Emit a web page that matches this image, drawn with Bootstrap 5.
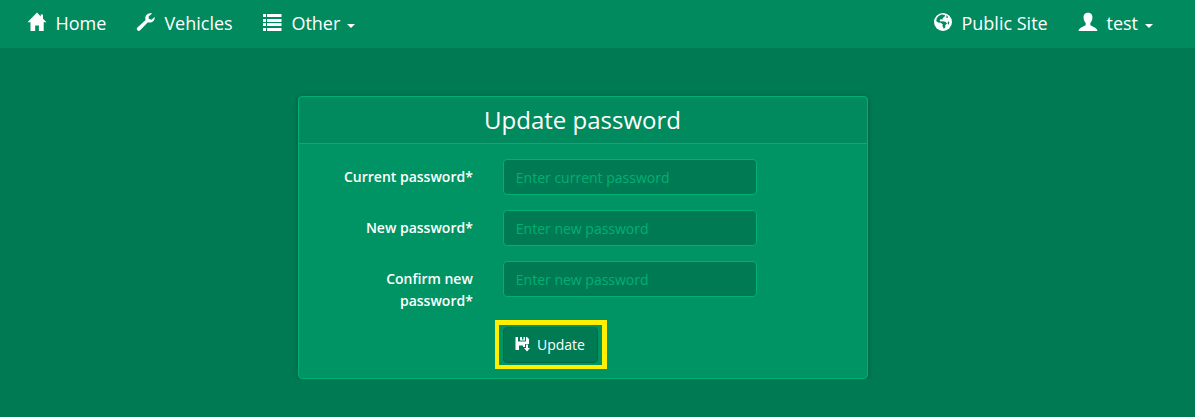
<!DOCTYPE html>
<html lang="en">
<head>
<meta charset="utf-8">
<meta name="viewport" content="width=device-width, initial-scale=1">
<title>Update password</title>
<link href="https://cdn.jsdelivr.net/npm/bootstrap@5.3.0/dist/css/bootstrap.min.css" rel="stylesheet">
<style>
body{background:#007a53;color:#fff;font-family:"Open Sans",sans-serif;font-size:14px;line-height:22px;overflow:hidden}
.site-nav{background:#008a5e;height:48px;padding:0 27px;font-size:18px}
.site-nav .nav-link{color:#fff;padding:0;line-height:26px;height:28px;white-space:nowrap}
.site-nav svg{width:20px;height:20px;fill:#fff;flex:none;margin-top:2px;margin-right:8.4px}
.site-nav .dropdown-toggle::after{border-top:4px solid;border-right:4px solid transparent;border-left:4px solid transparent;margin:14px 0 0 7px;vertical-align:0}
.pw-card{width:570px;margin:48px 0 0 298px;background:#009464;border:1px solid #00b073;border-radius:4px;color:#fff;box-shadow:0 1px 5px rgba(0,0,0,.25)}
.pw-card .card-header{background:#008a5e;border-bottom:1px solid #00b073;height:47px;padding:0}
.pw-card h1{font-size:24px;line-height:46px;font-weight:400;margin:0 1px 0 0}
.pw-card .card-body{padding:15px 0;height:234px;flex:none}
.form-line{--bs-gutter-x:30px;margin:0 0 15px}
.form-line label{font-weight:600;padding:7px 15.5px 0 14px;line-height:22px}
.form-line .form-control{height:36px;padding:6px 11.5px;background:#007a53;border:1px solid #00b073;border-radius:4px;color:#fff;font-size:14px;line-height:22px}
.form-control::placeholder{color:#00b073;opacity:1}
.btn-update{background:#007a53;border:1px solid #006b48;color:#fff;font-size:14px;line-height:22px;height:36px;width:95px;padding:0 0 0 11px;border-radius:4px}
.btn-update svg{width:16px;height:16px;fill:#fff;margin:-2px 5.600px 0 0}
.spot::after{content:"";position:absolute;left:-8px;top:-7px;width:112px;height:49px;border:solid #fff000;border-width:5px 5px 4px 4px;pointer-events:none}
</style>
</head>
<body>
<nav class="site-nav d-flex align-items-center justify-content-between">
  <div class="d-flex">
    <a class="nav-link d-flex" href="#" style="width:109px"><svg viewBox="0 0 20 20"><path d="M10 .6.5 10.2h3V19h4.7v-5.5h3.7V19h4.8v-8.8h2.8L16 6.8V2.5h-2.3v2z"/></svg>Home</a>
    <a class="nav-link d-flex" href="#" style="width:127px"><svg viewBox="0 0 20 20"><path d="M18.6 5.1 15.5 7.7l-2.8-1 .1-2.4 3.4-2.7C13 .4 9.7 2.4 9.3 5.5c-.1.9 0 1.7.3 2.4L1.4 15.4c-1.9 1.9.8 4.8 2.8 2.9l7.7-8.1c3.9 1.1 7.3-1.5 6.7-5.1z"/></svg>Vehicles</a>
    <a class="nav-link d-flex dropdown-toggle" href="#"><svg viewBox="0 0 20 20"><path d="M0 2h3v3H0zm4 0h14.500v3H4zM0 7h3v3H0zm4 0h14.500v3H4zm-4 4h3v3H0zm4 0h14.500v3H4zm-4 5h3v3H0zm4 0h14.500v3H4z"/><path stroke="#008a5e" stroke-width=".6" d="M0 10.700h19"/></svg>Other</a>
  </div>
  <div class="d-flex" style="margin-right:15px">
    <a class="nav-link d-flex" href="#" style="width:145px"><svg viewBox="0 0 20 20"><circle cx="10" cy="10" r="9"/><path fill="#008a5e" d="M8.500 2.600 5.700 4 3.800 6.300 3.200 9l1.800 1.500 2.700.2 2 1.600-.2 1.600 1.400 3 1.300-1.700.2-2.100 1.700-1.500-1.800-1.800-2.700-.6-2.200.2-.7-1.300 1.300-1 1.200.8.600-1.800 1.900-1.500.3-1.700zM12.300 3l1.500 1.200-.8.800.9 1 1.400-.4-1-1.600zM15.500 9.300l-1 1.400.8 2.300 1.100-2.300z"/></svg>Public Site</a>
    <a class="nav-link d-flex dropdown-toggle" href="#"><svg viewBox="0 0 20 20"><path d="M10 .8C6.700.8 5.400 3 5.600 5.800c.1 2.400.9 4 2.100 5.200v1.800c0 1.700-6.500 2-7.200 6.200h19c-.7-4.200-7.200-4.500-7.200-6.200V11c1.200-1.200 2-2.800 2.100-5.200C14.600 3 13.300.8 10 .8z"/></svg>test</a>
  </div>
</nav>
<main class="card pw-card">
  <div class="card-header text-center"><h1>Update password</h1></div>
  <form class="card-body">
    <div class="row form-line"><label class="col-4 text-end" for="cur">Current password*</label><div class="col-6"><input id="cur" type="password" class="form-control" placeholder="Enter current password"></div></div>
    <div class="row form-line"><label class="col-4 text-end" for="new1">New password*</label><div class="col-6"><input id="new1" type="password" class="form-control" placeholder="Enter new password"></div></div>
    <div class="row form-line"><label class="col-4 text-end" for="new2">Confirm new password*</label><div class="col-6"><input id="new2" type="password" class="form-control" placeholder="Enter new password"></div></div>
    <div class="row form-line"><div class="col-6 offset-4"><span class="spot position-relative d-inline-block"><button type="button" class="btn btn-update d-flex align-items-center"><svg viewBox="0 0 16 16"><path d="M.5 1H3v4.500h8V1h1l2 2v5h-4v3H8V9.500H4V14H.5zM5 1h2v2.500h1.500V1H10v3.500H5zM11 8.500h2V12h2l-3 3.500L9 12h2z"/></svg>Update</button></span></div></div>
  </form>
</main>
<script src="https://cdn.jsdelivr.net/npm/bootstrap@5.3.0/dist/js/bootstrap.bundle.min.js"></script>
</body>
</html>
